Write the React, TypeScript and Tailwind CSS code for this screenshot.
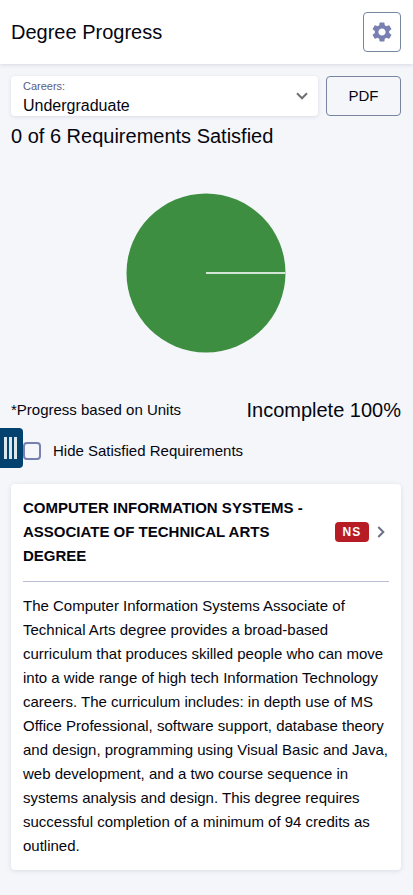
import React from 'react';
import { MdSettings } from 'react-icons/md';

interface Requirement {
  title: string;
  status: string;
  description: string;
}

const requirements: Requirement[] = [
  {
    title: 'Computer Information Systems - Associate of Technical Arts Degree',
    status: 'NS',
    description:
      'The Computer Information Systems Associate of Technical Arts degree provides a broad-based curriculum that produces skilled people who can move into a wide range of high tech Information Technology careers. The curriculum includes: in depth use of MS Office Professional, software support, database theory and design, programming using Visual Basic and Java, web development, and a two course sequence in systems analysis and design. This degree requires successful completion of a minimum of 94 credits as outlined.',
  },
];

function Header() {
  return (
    <header className="flex h-16 items-center justify-between bg-white pl-[11px] pr-3 shadow-[0_1px_4px_rgba(40,45,90,0.14)]">
      <h1 className="text-xl">Degree Progress</h1>
      <button
        type="button"
        aria-label="Settings"
        className="flex h-10 w-[38px] items-center justify-center rounded-sm border border-[#76869f]"
      >
        <MdSettings className="size-6 text-[#7780b0]" />
      </button>
    </header>
  );
}

function CareerSelect() {
  return (
    <div className="relative flex h-10 flex-1 flex-col rounded-sm bg-white pt-1 shadow-[0_1px_4px_rgba(40,45,90,0.12)]">
      <label htmlFor="career" className="px-3 text-[11px] leading-3 text-[#5c5b7e]">
        Careers:
      </label>
      <select
        id="career"
        className="h-6 w-full appearance-none bg-transparent px-3 pt-0.5 text-base leading-6 outline-none"
      >
        <option>Undergraduate</option>
      </select>
      <svg
        className="pointer-events-none absolute right-2.5 top-4 h-2 w-3"
        viewBox="0 0 12 8"
        fill="none"
        stroke="#707070"
        strokeWidth={2}
      >
        <path d="M1 1.3l5 5 5-5" />
      </svg>
    </div>
  );
}

function ProgressPie() {
  return (
    <svg className="mx-auto size-40" viewBox="0 0 160 160" role="img" aria-label="Incomplete 100%">
      <circle cx="80" cy="80" r="79.5" fill="#3d8e41" />
      <path d="M80 80h79.5" stroke="#d3e5d6" strokeWidth={2} />
    </svg>
  );
}

function RequirementCard({ title, status, description }: Requirement) {
  return (
    <article className="rounded-sm bg-white p-3 shadow-[0_1px_5px_rgba(40,45,90,0.12)]">
      <a href="#requirement" className="flex items-center">
        <h3 className="flex-1 pr-6 text-[15px] font-bold uppercase leading-6">{title}</h3>
        <span className="flex h-5 w-[34px] items-center justify-center rounded-sm bg-[#b71c24] text-xs font-bold tracking-widest text-white">
          {status}
        </span>
        <svg
          className="ml-2 mr-1 h-3 w-2"
          viewBox="0 0 8 12"
          fill="none"
          stroke="#697089"
          strokeWidth={2}
        >
          <path d="M1.3 1l5 5-5 5" />
        </svg>
      </a>
      <p className="mt-[13px] border-t border-[#babdd6] pt-3 text-[15px] leading-6">
        {description}
      </p>
    </article>
  );
}

export default function App() {
  return (
    <div className="min-h-screen bg-[#f4f6fa] font-['Liberation_Sans',Arial,sans-serif] text-[#05050f]">
      <Header />
      <main className="pb-6 pl-[11px] pr-3 pt-3">
        <div className="flex gap-2">
          <CareerSelect />
          <button
            type="button"
            className="h-10 w-[75px] rounded-sm border border-[#76869f] text-[15px]"
          >
            PDF
          </button>
        </div>
        <h2 className="pt-1.5 text-xl">0 of 6 Requirements Satisfied</h2>

        <div className="pb-[43px] pt-[43px]">
          <ProgressPie />
        </div>

        <div className="flex items-center justify-between">
          <span className="text-[15px]">*Progress based on Units</span>
          <span className="text-xl">Incomplete 100%</span>
        </div>

        <div className="relative -ml-[11px] flex h-[54px] items-center pl-[23px]">
          {/* Drawer handle */}
          <button
            type="button"
            aria-label="Open menu"
            className="absolute left-0 top-1 flex h-10 w-[23px] items-center gap-0.5 rounded-r-sm bg-[#03426f] pl-1"
          >
            <span className="h-[22px] w-[3px] bg-[#dbe6ed]" />
            <span className="h-[22px] w-[3px] bg-[#dbe6ed]" />
            <span className="h-[22px] w-[3px] bg-[#dbe6ed]" />
          </button>
          <input
            id="hide-satisfied"
            type="checkbox"
            className="size-[18px] appearance-none rounded-sm border-2 border-[#7780b0] checked:bg-[#7780b0]"
          />
          <label htmlFor="hide-satisfied" className="pl-3 text-[15px]">
            Hide Satisfied Requirements
          </label>
        </div>

        <section className="flex flex-col gap-3 pt-1.5">
          {requirements.map((requirement) => (
            <RequirementCard key={requirement.title} {...requirement} />
          ))}
        </section>
      </main>
    </div>
  );
}
